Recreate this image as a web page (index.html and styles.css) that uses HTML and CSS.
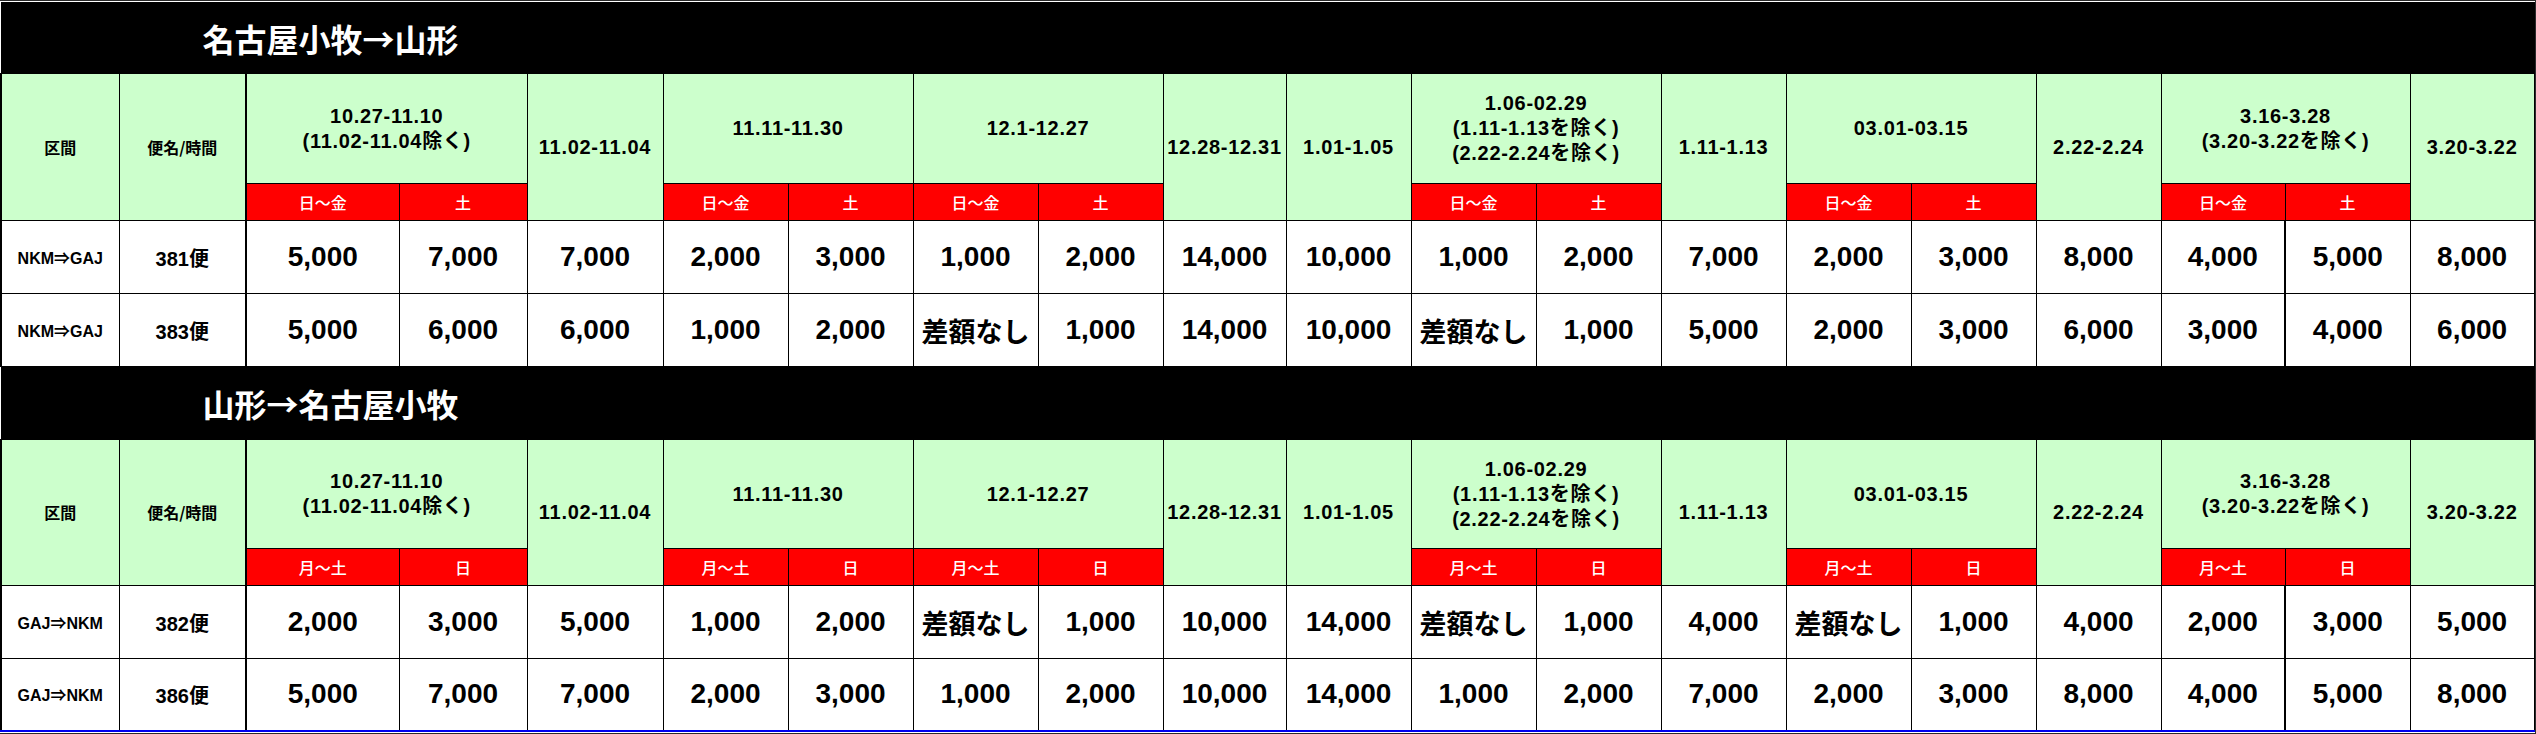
FILE: index.html
```html
<!DOCTYPE html>
<html lang="ja">
<head>
<meta charset="utf-8">
<title>名古屋小牧⇔山形 運賃差額表</title>
<link rel="stylesheet" href="styles.css">
</head>
<body>
<div class="frame">
<table class="fare">
<colgroup>
<col class="w118"><col class="w127"><col class="w153"><col class="w128"><col class="w136">
<col class="w125"><col class="w125"><col class="w125"><col class="w125"><col class="w123">
<col class="w125"><col class="w125"><col class="w125"><col class="w125"><col class="w125">
<col class="w125"><col class="w125"><col class="w124"><col class="w125"><col class="w124">
</colgroup>
<tbody>
<tr class="title t1"><th colspan="20">名古屋小牧→山形</th></tr>
<tr class="head h1">
<th rowspan="2" class="small first">区間</th>
<th rowspan="2" class="small">便名/時間</th>
<th colspan="2" class="thick">10.27-11.10<br>(11.02-11.04除く)</th>
<th rowspan="2">11.02-11.04</th>
<th colspan="2">11.11-11.30</th>
<th colspan="2">12.1-12.27</th>
<th rowspan="2">12.28-12.31</th>
<th rowspan="2">1.01-1.05</th>
<th colspan="2">1.06-02.29<br>(1.11-1.13を除く)<br>(2.22-2.24を除く)</th>
<th rowspan="2">1.11-1.13</th>
<th colspan="2">03.01-03.15</th>
<th rowspan="2">2.22-2.24</th>
<th colspan="2">3.16-3.28<br>(3.20-3.22を除く)</th>
<th rowspan="2">3.20-3.22</th>
</tr>
<tr class="days">
<th class="thick">日～金</th><th>土</th>
<th>日～金</th><th>土</th>
<th>日～金</th><th>土</th>
<th>日～金</th><th>土</th>
<th>日～金</th><th>土</th>
<th>日～金</th><th>土</th>
</tr>
<tr class="data">
<td class="route first">NKM⇒GAJ</td><td class="flt">381便</td>
<td class="num thick">5,000</td><td class="num">7,000</td><td class="num">7,000</td>
<td class="num">2,000</td><td class="num">3,000</td><td class="num">1,000</td><td class="num">2,000</td>
<td class="num">14,000</td><td class="num">10,000</td><td class="num">1,000</td><td class="num">2,000</td>
<td class="num">7,000</td><td class="num">2,000</td><td class="num">3,000</td><td class="num">8,000</td>
<td class="num">4,000</td><td class="num thick">5,000</td><td class="num">8,000</td>
</tr>
<tr class="data">
<td class="route first">NKM⇒GAJ</td><td class="flt">383便</td>
<td class="num thick">5,000</td><td class="num">6,000</td><td class="num">6,000</td>
<td class="num">1,000</td><td class="num">2,000</td><td class="none">差額なし</td><td class="num">1,000</td>
<td class="num">14,000</td><td class="num">10,000</td><td class="none">差額なし</td><td class="num">1,000</td>
<td class="num">5,000</td><td class="num">2,000</td><td class="num">3,000</td><td class="num">6,000</td>
<td class="num">3,000</td><td class="num thick">4,000</td><td class="num">6,000</td>
</tr>
<tr class="title t2"><th colspan="20">山形→名古屋小牧</th></tr>
<tr class="head h2">
<th rowspan="2" class="small first">区間</th>
<th rowspan="2" class="small">便名/時間</th>
<th colspan="2" class="thick">10.27-11.10<br>(11.02-11.04除く)</th>
<th rowspan="2">11.02-11.04</th>
<th colspan="2">11.11-11.30</th>
<th colspan="2">12.1-12.27</th>
<th rowspan="2">12.28-12.31</th>
<th rowspan="2">1.01-1.05</th>
<th colspan="2">1.06-02.29<br>(1.11-1.13を除く)<br>(2.22-2.24を除く)</th>
<th rowspan="2">1.11-1.13</th>
<th colspan="2">03.01-03.15</th>
<th rowspan="2">2.22-2.24</th>
<th colspan="2">3.16-3.28<br>(3.20-3.22を除く)</th>
<th rowspan="2">3.20-3.22</th>
</tr>
<tr class="days">
<th class="thick">月～土</th><th>日</th>
<th>月～土</th><th>日</th>
<th>月～土</th><th>日</th>
<th>月～土</th><th>日</th>
<th>月～土</th><th>日</th>
<th>月～土</th><th>日</th>
</tr>
<tr class="data">
<td class="route first">GAJ⇒NKM</td><td class="flt">382便</td>
<td class="num thick">2,000</td><td class="num">3,000</td><td class="num">5,000</td>
<td class="num">1,000</td><td class="num">2,000</td><td class="none">差額なし</td><td class="num">1,000</td>
<td class="num">10,000</td><td class="num">14,000</td><td class="none">差額なし</td><td class="num">1,000</td>
<td class="num">4,000</td><td class="none">差額なし</td><td class="num">1,000</td><td class="num">4,000</td>
<td class="num">2,000</td><td class="num thick">3,000</td><td class="num">5,000</td>
</tr>
<tr class="data last">
<td class="route first">GAJ⇒NKM</td><td class="flt">386便</td>
<td class="num thick">5,000</td><td class="num">7,000</td><td class="num">7,000</td>
<td class="num">2,000</td><td class="num">3,000</td><td class="num">1,000</td><td class="num">2,000</td>
<td class="num">10,000</td><td class="num">14,000</td><td class="num">1,000</td><td class="num">2,000</td>
<td class="num">7,000</td><td class="num">2,000</td><td class="num">3,000</td><td class="num">8,000</td>
<td class="num">4,000</td><td class="num thick">5,000</td><td class="num">8,000</td>
</tr>
</tbody>
</table>
</div>
</body>
</html>
```

FILE: styles.css
```css
html, body {
  margin: 0;
  padding: 0;
  background: #ffffff;
}

body {
  width: 2536px;
  height: 734px;
  overflow: hidden;
}

.frame {
  box-sizing: border-box;
  width: 2536px;
  height: 734px;
  border-top: 1px solid #2b2b2b;
  border-right: 1px solid #2b2b2b;
  border-bottom: 1px solid #2b2b2b;
  padding: 1px 1px 1px 0;
}

.fare {
  border-collapse: collapse;
  table-layout: fixed;
  width: 2533px;
  font-family: "Liberation Sans", "Noto Sans CJK JP", sans-serif;
  color: #000000;
}

.w118 { width: 118px; }
.w123 { width: 123px; }
.w124 { width: 124px; }
.w125 { width: 125px; }
.w127 { width: 127px; }
.w128 { width: 128px; }
.w136 { width: 136px; }
.w153 { width: 153px; }

.fare th,
.fare td {
  border: 1px solid #000000;
  padding: 0;
  text-align: center;
  vertical-align: middle;
  white-space: nowrap;
  overflow: hidden;
}

.fare .first {
  border-left: 2px solid #000000;
}

.fare .thick {
  border-left: 2px solid #000000;
}

/* title bands */
.title th {
  background: #000000;
  color: #ffffff;
  border-color: #000000;
  text-align: left;
  padding-left: 201px;
  font-family: "Noto Sans CJK JP", sans-serif;
  font-size: 32px;
  font-weight: 700;
  line-height: 40px;
  letter-spacing: 0;
}

.t1 { height: 71px; }
.t2 { height: 73px; }

/* green period header */
.head th {
  background: #ccffcc;
  font-size: 20px;
  font-weight: 700;
  line-height: 25px;
  letter-spacing: 0.7px;
}

.h1 { height: 110px; }
.h2 { height: 109px; }

.head .small {
  font-size: 16px;
  letter-spacing: 0;
  font-family: "Noto Sans CJK JP", sans-serif;
}

/* red weekday row */
.days { height: 37px; }

.days th {
  background: #ff0000;
  color: #ffffff;
  font-family: "Noto Sans CJK JP", sans-serif;
  font-size: 16px;
  font-weight: 500;
  line-height: 20px;
}

/* data rows */
.data { height: 73px; }
.data.last { height: 72px; }

.data td {
  background: #ffffff;
}

.data.last td {
  border-bottom: 2px solid #0000ee;
}

.route {
  font-size: 16px;
  font-weight: 700;
}

.flt {
  font-size: 20px;
  font-weight: 700;
}

.num {
  font-size: 28px;
  font-weight: 700;
}

.none {
  font-family: "Noto Sans CJK JP", sans-serif;
  font-size: 27px;
  font-weight: 700;
}
```
